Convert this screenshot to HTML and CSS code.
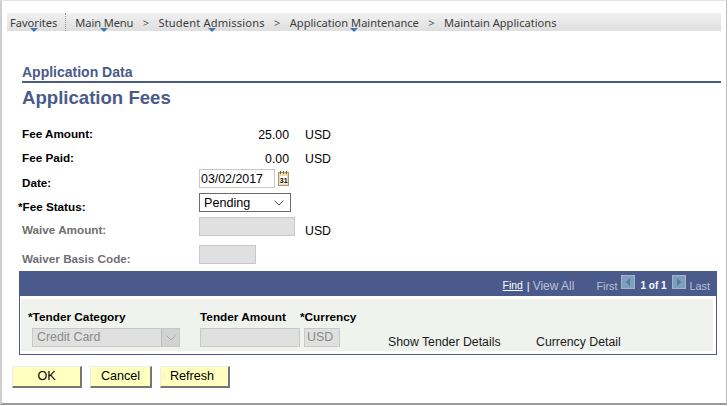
FILE: index.html
```html
<!DOCTYPE html>
<html lang="en">
<head>
<meta charset="utf-8">
<title>Application Fees</title>
<link rel="stylesheet" href="styles.css">
</head>
<body>
<div class="frame">
  <nav class="crumbs">
    <span class="crumb fav">Favorites<i class="drop"></i></span>
    <span class="sep"></span>
    <span class="crumb main">Main Menu<i class="drop"></i></span>
    <span class="chev">&gt;</span>
    <span class="crumb student">Student Admissions<i class="drop"></i></span>
    <span class="chev">&gt;</span>
    <span class="crumb">Application Maintenance<i class="drop"></i></span>
    <span class="chev">&gt;</span>
    <span class="crumb">Maintain Applications</span>
  </nav>
  <h2 class="section">Application Data</h2>
  <h1 class="title">Application Fees</h1>
  <div class="form">
    <div class="row r-amount"><span class="label">Fee Amount:</span><span class="val">25.00</span><span class="cur">USD</span></div>
    <div class="row r-paid"><span class="label">Fee Paid:</span><span class="val">0.00</span><span class="cur">USD</span></div>
    <div class="row r-date"><span class="label">Date:</span><span class="input date">03/02/2017</span>
      <svg class="cal" width="13" height="15" viewBox="0 0 13 15"><rect x="1.500" y="1.500" width="10" height="13" fill="#efdfae" stroke="#a99660"/><path d="M3.500 0v3M6.500 0v3M9.500 0v3" stroke="#6f6138"/><rect x="3" y="5" width="7" height="7.500" fill="#fff"/><text x="2.800" y="11.500" class="cal-t">31</text></svg>
    </div>
    <div class="row r-status"><span class="label req">*Fee Status:</span><span class="select">Pending<svg class="chevron" width="10" height="6" viewBox="0 0 10 6"><path d="M.5.500 5 5 9.500.500" fill="none" stroke="#555"/></svg></span></div>
    <div class="row r-waive"><span class="label dim">Waive Amount:</span><span class="input off waive"></span><span class="cur low">USD</span></div>
    <div class="row r-basis"><span class="label dim">Waiver Basis Code:</span><span class="input off basis"></span></div>
  </div>
  <section class="grid">
    <header class="grid-head">
      <a class="find">Find</a><span class="bar">|</span><span class="muted viewall">View All</span>
      <span class="muted first">First</span>
      <svg class="arrow" width="14" height="14" viewBox="0 0 14 14"><rect x=".5" y=".5" width="13" height="13" fill="#7f9fbd" stroke="#9fb6cc"/><path d="M9 3v8L5 7z" fill="#557a9f"/></svg>
      <span class="count">1 of 1</span>
      <svg class="arrow" width="14" height="14" viewBox="0 0 14 14"><rect x=".5" y=".5" width="13" height="13" fill="#7f9fbd" stroke="#9fb6cc"/><path d="M5 3v8l4-4z" fill="#557a9f"/></svg>
      <span class="muted last">Last</span>
    </header>
    <div class="grid-body">
      <div class="cell c-cat"><span class="th">*Tender Category</span>
        <span class="input off cat">Credit Card<span class="caret"><svg width="10" height="6" viewBox="0 0 10 6"><path d="M.5.500 5 5 9.500.500" fill="none" stroke="#aaa"/></svg></span></span></div>
      <div class="cell c-amt"><span class="th">Tender Amount</span><span class="input off amt"></span></div>
      <div class="cell c-cur"><span class="th">*Currency</span><span class="input off curr">USD</span></div>
      <span class="link l-show">Show Tender Details</span>
      <span class="link l-cur">Currency Detail</span>
    </div>
  </section>
  <div class="actions">
    <button class="btn ok">OK</button>
    <button class="btn cancel">Cancel</button>
    <button class="btn refresh">Refresh</button>
  </div>
</div>
</body>
</html>
```
FILE: styles.css
```css
* { box-sizing: border-box; }
html, body { margin: 0; padding: 0; background: #fff; }
body { width: 728px; height: 406px; overflow: hidden; font-family: "Liberation Sans", Arial, sans-serif; font-size: 12.300px; color: #000; }
.frame {
  width: 727px; height: 405px;
  border-top: 1px solid #e2e2e2; border-left: 2px solid #cfcfcf; border-right: 1px solid #bdbdbd; border-bottom: 2px solid #9a9a9a;
  padding: 12px 0 0 5px;
}
.crumbs {
  display: flex; align-items: center; width: 714px; height: 18px; padding-left: 3px;
  background: linear-gradient(#f1f1f1, #dedede);
  font-family: "Noto Sans", sans-serif; font-size: 11.100px; color: #3c3c3c;
}
.crumb { position: relative; white-space: nowrap; }
.main { letter-spacing: -.1px; }
.student { letter-spacing: .17px; }
.drop { position: absolute; left: 50%; bottom: -2px; margin-left: -4px; border: 4px solid transparent; border-top: 4px solid #3f76b5; border-bottom: 0; }
.sep { width: 1px; height: 18px; margin: 0 9px 0 8px; border-left: 1px dotted #999; }
.chev { width: 25px; text-align: center; color: #555; }
.section { margin: 33px 0 0 15px; height: 17px; font-size: 14px; line-height: 17px; font-weight: bold; color: #4a5a8a; }
.title {
  margin: 0 0 0 15px; padding-top: 4px; height: 27px; width: 699px;
  border-top: 2px solid #4a5a8a; font-size: 18.600px; line-height: 22px; font-weight: bold; color: #4a5a8a;
}
.form { margin: 17px 0 0 15px; display: flex; flex-direction: column; }
.row { display: flex; align-items: flex-start; }
.label { width: 177px; font-weight: bold; font-size: 11.700px; line-height: 14px; white-space: nowrap; }
.req { margin-left: -4px; width: 181px; }
.dim { color: #6f6f6f; }
.val { width: 90px; text-align: right; line-height: 14px; padding-top: 1px; }
.cur { margin-left: 16px; line-height: 14px; padding-top: 1px; }
.low { margin: 6px 0 0 10px; }
.r-amount { height: 24px; padding-top: 2px; }
.r-paid { height: 20px; padding-top: 2px; }
.r-date { height: 24px; }
.input { display: block; height: 19px; border: 1px solid #c8c8c8; line-height: 17px; font-size: 12.400px; background: #fff; white-space: nowrap; }
.r-date .label, .r-status .label, .r-basis .label { padding-top: 7px; }
.r-waive .label { padding-top: 6px; }
.date { width: 76px; padding: 1px 0 0 1px; }
.cal { margin: 2px 0 0 2px; }
.cal-t { font-size: 7px; font-weight: bold; }
.select { display: flex; align-items: center; justify-content: space-between; width: 92px; height: 19px; border: 1px solid #6b6b6b; padding: 1px 6px 0 4px; background: #fff; font-size: 12.600px; }
.r-status { height: 24px; }
.r-waive { height: 28px; }
.r-basis { height: 26px; }
.off { background: #e0e0e0; color: #8a8a8a; }
.waive { width: 96px; }
.basis { width: 57px; }
.grid { margin: 0 0 0 12px; width: 698px; height: 84px; border: 1px solid #4a5a8a; border-top: 0; }
.grid-head {
  display: flex; align-items: center; height: 25px; padding-right: 6px; justify-content: flex-end;
  background: #4a5a8a; font-size: 10.800px; color: #fff;
}
.grid-head > a, .grid-head > span { margin-top: 4px; }
.find { color: #fff; text-decoration: underline; font-size: 10.400px; }
.bar { margin-left: 4px; margin-right: 3px; }
.muted { color: #b9c0d6; }
.viewall { margin-right: 22px; font-size: 12px; }
.first { margin-right: 4px; }
.arrow { margin-top: -3px; }
.count { margin-left: 5px; margin-right: 5px; font-weight: bold; font-size: 10px; }
.last { margin-left: 4px; }
.grid-body {
  display: flex; align-items: flex-start; margin: 3px 3px 0 1px; padding: 11px 0 0 7px; height: 52px;
  background: #f0f2ee;
}
.cell { display: flex; flex-direction: column; }
.th { font-weight: bold; font-size: 11.800px; line-height: 14px; white-space: nowrap; }
.c-cat { width: 172px; }
.c-amt { width: 100px; }
.c-cur { width: 88px; }
.cat { position: relative; width: 148px; margin: 4px 0 0 4px; padding-left: 4px; }
.caret { position: absolute; right: 0; top: 0; width: 18px; height: 17px; background: #d2d2d2; border-left: 1px solid #bbb; display: flex; align-items: center; justify-content: center; }
.amt { width: 100px; margin-top: 4px; }
.curr { width: 36px; margin: 4px 0 0 4px; padding-left: 2px; }
.link { margin-top: 25px; line-height: 14px; white-space: nowrap; color: #1a1a1a; }
.l-show { width: 148px; }
.actions { display: flex; margin: 11px 0 0 5px; gap: 8px; }
.btn {
  height: 22px; padding: 0 0 2px; font: 12.600px "Liberation Sans", Arial, sans-serif; color: #000;
  background: #ffffbf; border-style: solid; border-color: #ededed #777 #777 #ededed; border-width: 1px 2px 2px 1px; cursor: pointer;
}
.ok { width: 70px; }
.cancel { width: 62px; }
.refresh { width: 70px; padding-right: 5px; }
```
